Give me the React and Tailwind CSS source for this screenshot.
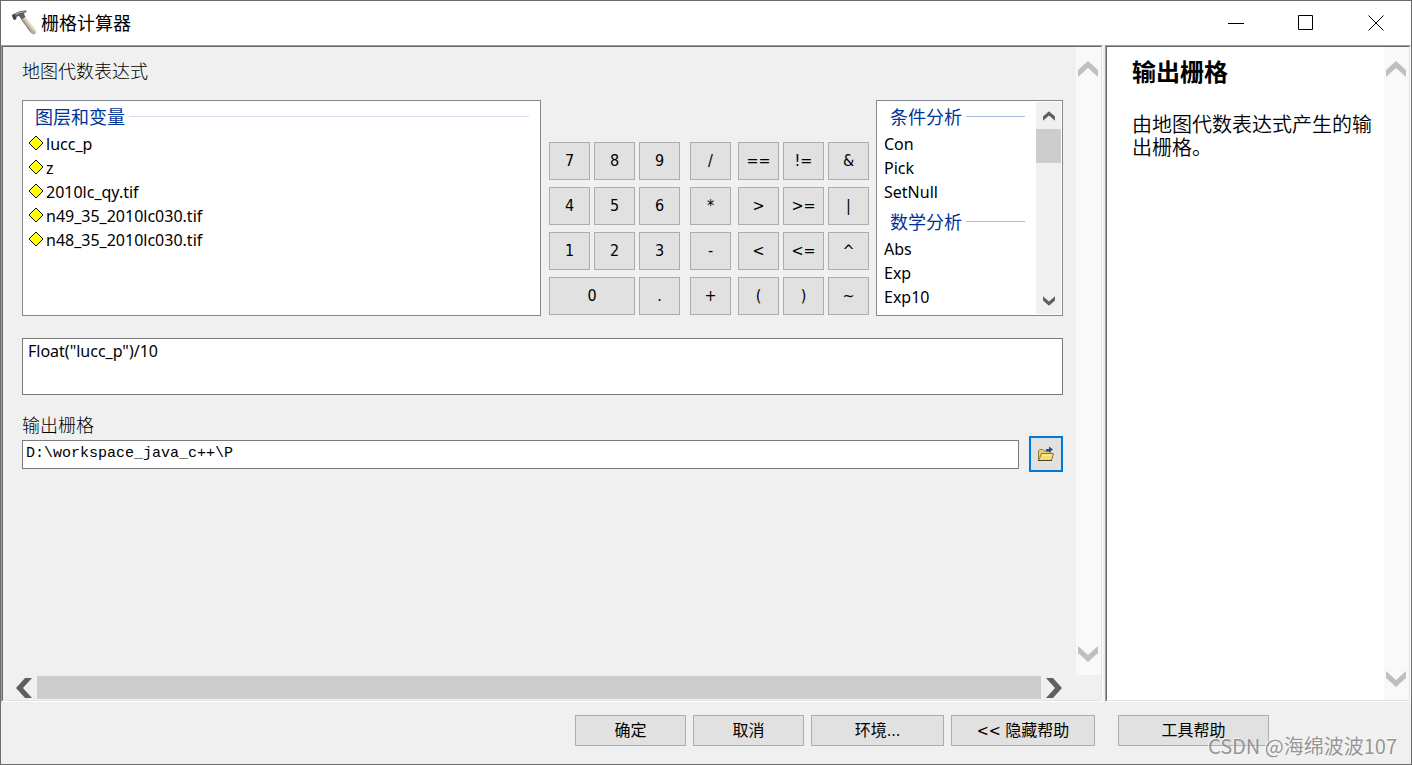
import { useState } from "react";
import clsx from "clsx";

const LAYERS = [
  "lucc_p",
  "z",
  "2010lc_qy.tif",
  "n49_35_2010lc030.tif",
  "n48_35_2010lc030.tif",
];

const FUNCTIONS = [
  { title: "条件分析", items: ["Con", "Pick", "SetNull"] },
  { title: "数学分析", items: ["Abs", "Exp", "Exp10"] },
];

const DIGITS = ["7", "8", "9", "4", "5", "6", "1", "2", "3", "0", "."];
const ARITHMETIC = ["/", "*", "-", "+"];
const LOGIC = ["==", "!=", "&", ">", ">=", "|", "<", "<=", "^", "(", ")", "~"];

const LATIN = "font-['DejaVu_Sans_Condensed','Noto_Sans_CJK_SC',sans-serif]";
const LIST = "font-['Noto_Sans','Noto_Sans_CJK_SC',sans-serif]";

const HammerIcon = () => (
  <svg width="26" height="26" viewBox="0 0 26 26" aria-hidden="true">
    <path d="M10 9 L13.500 6.500 L25 20.500 Q25.500 24 22.500 24.500 Q20.500 24 19 21.500 Z" fill="#b9ac98" />
    <path d="M12 7.500 L13.500 6.500 L25 20.500 L24 22.500 Z" fill="#e4dac7" />
    <path d="M10.500 9.500 L20 22.500" stroke="#85796a" strokeWidth="1" fill="none" />
    <path d="M1 5 L4.500 3 Q9 0 15.500 0.500 L15.500 2 Q13 2.300 13 4 L14.500 7 L10.500 9.500 L8 6 L6 6.500 L5 9.500 L2.500 9.500 Z" fill="#5b6164" />
    <path d="M4 3.800 Q9 0.800 14.500 1.200 L12 2.600 Q8 3 5 5 Z" fill="#a5acaf" />
    <path d="M1 5 L3 4.500 L5 7.500 L4.500 9.500 L2.500 9.500 Z" fill="#3c4244" />
  </svg>
);

const FolderIcon = () => (
  <svg width="18" height="18" viewBox="0 0 18 18" aria-hidden="true">
    <path d="M1.500 15 V5.500 L2.500 4.500 H6 L7.500 6 H13.500 V8.500" fill="#e6cf72" stroke="#98823a" />
    <path d="M1.500 15.500 L4.500 8.500 H16.500 L14.500 15.500 Z" fill="#f3dc7c" stroke="#8c742b" />
    <path d="M1 15.500 H15" stroke="#4f421d" />
    <path d="M5.500 10 H15" stroke="#fff1ae" />
    <path d="M9 6.500 V4 H12 V1.500 L16 4.500 L12 7.500 V6.500 Z" fill="#17519a" />
  </svg>
);

const DiamondIcon = () => (
  <svg width="16" height="16" viewBox="0 0 16 16" className="mb-[2px]" aria-hidden="true">
    <path d="M8 1 L15 8 L8 15 L1 8 Z" fill="#ffff00" stroke="#111" />
  </svg>
);

const ARROWS = {
  up: "M0 11 L10 2 L20 11 V18 L10 9 L0 18 Z",
  down: "M0 2 L10 11 L20 2 V9 L10 18 L0 9 Z",
  left: "M1 10 L10 0 H17 L8 10 L17 20 H10 Z",
  right: "M19 10 L10 0 H3 L12 10 L3 20 H10 Z",
};

const ArrowButton = ({ dir, label, size = 20, className }) => (
  <button type="button" aria-label={label} className={clsx("flex shrink-0 items-center justify-center", className)}>
    <svg width={size} height={size} viewBox="0 0 20 20" fill="currentColor" aria-hidden="true">
      <path d={ARROWS[dir]} />
    </svg>
  </button>
);

// idle vertical scrollbar of a pane
const PaneScrollbar = () => (
  <div className="flex w-[25px] shrink-0 flex-col justify-between bg-[#f9f9f9] pr-px text-[#bfbfbf]">
    <ArrowButton dir="up" label="向上滚动" className="h-[43px]" />
    <ArrowButton dir="down" label="向下滚动" className="h-[43px]" />
  </div>
);

// two-tone sunken frame
const SunkenPane = ({ className, children }) => (
  <div className={clsx("flex border border-t-[#a0a0a0] border-r-white border-b-white border-l-[#a0a0a0]", className)}>
    <div className="flex min-w-0 flex-1 border border-t-[#696969] border-r-[#e3e3e3] border-b-[#e3e3e3] border-l-[#696969]">
      {children}
    </div>
  </div>
);

const GroupTitle = ({ children, line }) => (
  <h3 className="flex h-[31px] items-center gap-1 pr-[11px] pl-3 text-lg text-[#003399]">
    <span className="pb-[2px]">{children}</span>
    <span className={clsx("h-px flex-1", line)} />
  </h3>
);

const Key = ({ value, onPress, className }) => (
  <button
    type="button"
    onClick={() => onPress(value)}
    className={clsx("h-[38px] border border-[#adadad] bg-[#e1e1e1] text-base hover:bg-[#e5f1fb]", LATIN, className)}
  >
    {value}
  </button>
);

const FooterButton = ({ className, children }) => (
  <button
    type="button"
    className={clsx("h-[31px] border border-[#adadad] bg-[#e1e1e1] text-base leading-none hover:bg-[#e5f1fb]", LATIN, className)}
  >
    {children}
  </button>
);

const App = () => {
  const [expression, setExpression] = useState('Float("lucc_p")/10');
  const [output, setOutput] = useState("D:\\workspace_java_c++\\P");

  const append = (value) => setExpression((prev) => prev + value);

  return (
    <div className="relative flex min-h-screen flex-col border border-[#6b6b6b] bg-[#f0f0f0] font-['Noto_Sans_CJK_SC',sans-serif] text-black">
      {/* Title bar */}
      <header className="flex h-11 items-center bg-white pl-[10px]">
        <HammerIcon />
        <h1 className="ml-1 flex-1 pb-[2px] text-lg">栅格计算器</h1>
        <button type="button" aria-label="最小化" className="flex h-full w-[70px] items-center justify-center">
          <svg width="16" height="16" stroke="#000"><path d="M0 8.500 H16" /></svg>
        </button>
        <button type="button" aria-label="最大化" className="flex h-full w-[70px] items-center justify-center">
          <svg width="16" height="16" stroke="#000" fill="none"><path d="M0.500 0.500 H14.500 V14.500 H0.500 Z" /></svg>
        </button>
        <button type="button" aria-label="关闭" className="flex h-full w-[70px] items-center justify-center">
          <svg width="16" height="16" stroke="#000"><path d="M0.500 0.500 L15.500 15.500 M15.500 0.500 L0.500 15.500" /></svg>
        </button>
      </header>

      <main className="flex flex-1 gap-[2px]">
        {/* Parameters */}
        <SunkenPane className="min-w-0 flex-1">
          <div className="flex min-w-0 flex-1 flex-col">
            <div className="flex flex-1">
              <div className="flex min-w-0 flex-1 flex-col pr-[13px] pl-[19px]">
                <h2 className="mt-[10px] h-[27px] text-lg leading-[27px] font-light">地图代数表达式</h2>

                <div className="mt-4 flex h-[216px]">
                  <section className="min-w-0 flex-1 border border-[#828790] bg-white">
                    <GroupTitle line="bg-[#d5dff0]">图层和变量</GroupTitle>
                    <ul className={clsx("pl-[5px] text-base leading-6", LIST)}>
                      {LAYERS.map((name) => (
                        <li key={name} className="flex h-6 items-center gap-[2px]">
                          <DiamondIcon />
                          {name}
                        </li>
                      ))}
                    </ul>
                  </section>

                  {/* Keypad */}
                  <div className="mr-[7px] ml-2 flex items-end pb-px">
                    <div className="grid grid-cols-[41px_41px_41px] gap-x-1 gap-y-[7px]">
                      {DIGITS.map((d) => (
                        <Key key={d} value={d} onPress={append} className={d === "0" ? "col-span-2" : ""} />
                      ))}
                    </div>
                    <div className="ml-[10px] grid grid-cols-[41px] gap-y-[7px]">
                      {ARITHMETIC.map((op) => (
                        <Key key={op} value={op} onPress={append} />
                      ))}
                    </div>
                    <div className="ml-[7px] grid grid-cols-[41px_41px_41px] gap-x-1 gap-y-[7px]">
                      {LOGIC.map((op) => (
                        <Key key={op} value={op} onPress={append} />
                      ))}
                    </div>
                  </div>

                  <section className="flex w-[187px] border border-[#828790] bg-white p-px pt-0">
                    <div className="flex-1 space-y-[2px]">
                      {FUNCTIONS.map((group) => (
                        <div key={group.title}>
                          <GroupTitle line="bg-[#a8bbe0]">{group.title}</GroupTitle>
                          <ul className={clsx("pl-[6px] text-base leading-6", LIST)}>
                            {group.items.map((item) => (
                              <li key={item}>{item}</li>
                            ))}
                          </ul>
                        </div>
                      ))}
                    </div>
                    <div className="mt-px flex w-[25px] flex-col bg-[#f0f0f0] text-[#606060]">
                      <ArrowButton dir="up" label="向上滚动" size={12} className="h-[27px]" />
                      <div className="h-[34px] bg-[#cdcdcd]" />
                      <ArrowButton dir="down" label="向下滚动" size={12} className="mt-auto h-[27px]" />
                    </div>
                  </section>
                </div>

                <textarea
                  aria-label="地图代数表达式"
                  value={expression}
                  onChange={(e) => setExpression(e.target.value)}
                  className={clsx("mt-[22px] block h-[57px] w-full resize-none border border-[#7a7a7a] bg-white px-[5px] text-base leading-6 outline-none", LIST)}
                />

                <label htmlFor="output" className="mt-4 h-[27px] self-start text-lg leading-[27px] font-light">
                  输出栅格
                </label>
                <div className="-mt-[2px] flex items-center gap-[10px]">
                  <input
                    id="output"
                    type="text"
                    value={output}
                    onChange={(e) => setOutput(e.target.value)}
                    className="h-[29px] min-w-0 flex-1 border border-[#7a7a7a] bg-white px-[3px] pb-[2px] font-['Liberation_Mono',monospace] text-[15px] outline-none"
                  />
                  <button
                    type="button"
                    aria-label="浏览"
                    className="flex h-9 w-[34px] items-center justify-center border-2 border-[#0078d7] bg-[#e1e1e1]"
                  >
                    <FolderIcon />
                  </button>
                </div>
              </div>
              <PaneScrollbar />
            </div>

            {/* Horizontal scrollbar */}
            <div className="flex h-[25px] items-center pr-[36px] pl-[10px] text-[#606060]">
              <ArrowButton dir="left" label="向左滚动" className="w-6" />
              <div className="h-[23px] flex-1 bg-[#cdcdcd]" />
              <ArrowButton dir="right" label="向右滚动" className="w-6" />
            </div>
          </div>
        </SunkenPane>

        {/* Help */}
        <SunkenPane className="w-[306px] shrink-0">
          <aside className="flex-1 bg-white pl-[25px]">
            <h2 className="mt-2 text-2xl leading-8 font-bold">输出栅格</h2>
            <p className="mt-[25px] text-xl leading-[23px] font-[350]">由地图代数表达式产生的输出栅格。</p>
          </aside>
          <PaneScrollbar />
        </SunkenPane>
      </main>

      <footer className="flex h-[62px] justify-end gap-[7px] pt-[13px] pr-[142px]">
        <FooterButton className="w-[111px]">确定</FooterButton>
        <FooterButton className="w-[111px]">取消</FooterButton>
        <FooterButton className="w-[133px]">环境...</FooterButton>
        <FooterButton className="w-[144px]">&lt;&lt; 隐藏帮助</FooterButton>
        <FooterButton className="ml-4 w-[151px]">工具帮助</FooterButton>
      </footer>

      <span className="pointer-events-none absolute right-[14px] bottom-1 text-xl leading-7 text-[#8a8a8a]/90 [text-shadow:-1px_-1px_0_#ffffff99]">
        CSDN @海绵波波107
      </span>
    </div>
  );
};

export default App;
